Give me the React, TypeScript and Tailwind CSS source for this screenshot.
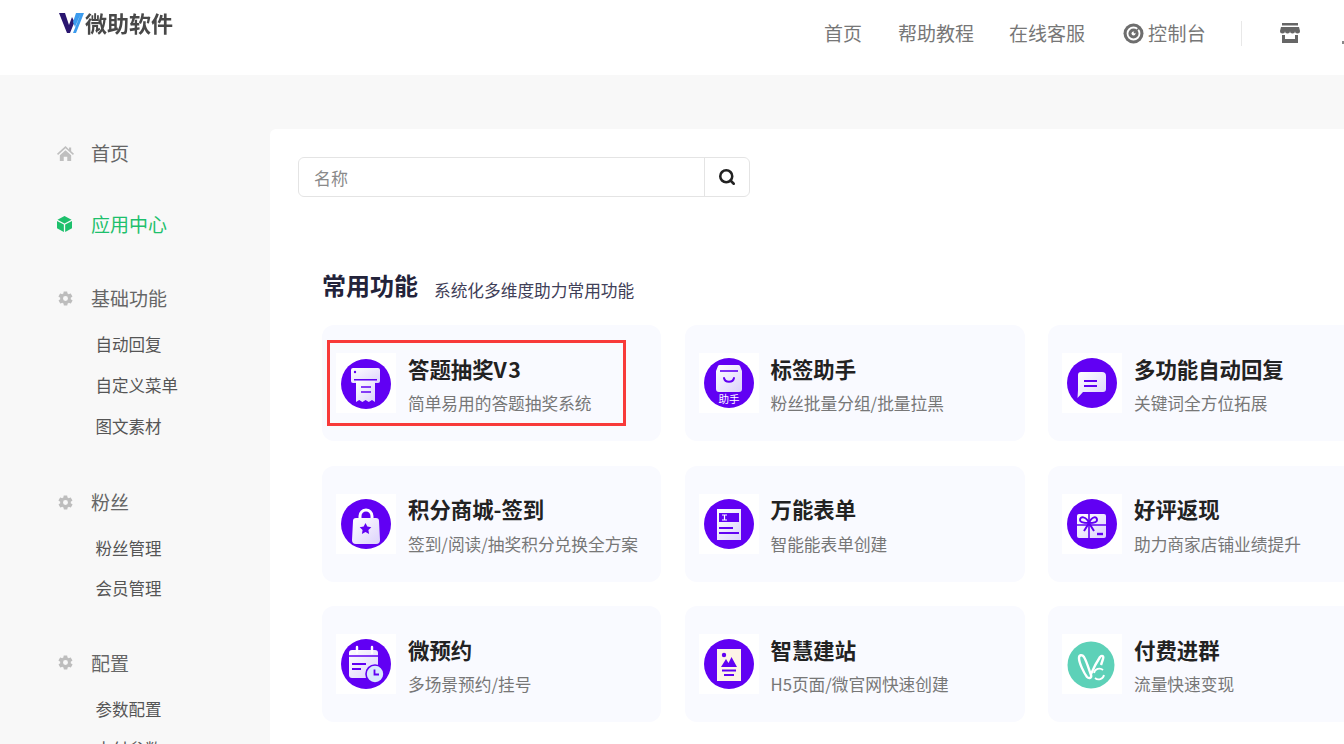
import React from 'react'
import { Search } from 'lucide-react'

const PURPLE = '#6100f3'
const LIGHT = 'url(#lav)'

function IconShell({ children, bg = PURPLE, r = 25, cx = 30, cy = 30 }: { children: React.ReactNode; bg?: string; r?: number; cx?: number; cy?: number }) {
  return (
    <svg width="60" height="60" viewBox="0 0 60 60" className="block">
      <defs>
        <linearGradient id="lav" x1="0" y1="0" x2="1" y2="1">
          <stop offset="0" stopColor="#ffffff" />
          <stop offset="1" stopColor="#dcd2fb" />
        </linearGradient>
      </defs>
      <circle cx={cx} cy={cy} r={r} fill={bg} />
      {children}
    </svg>
  )
}

const icons: Record<string, React.ReactNode> = {
  printer: (
    <IconShell cy={31}>
      <path d="M15 17a2 2 0 0 1 2-2h25a2 2 0 0 1 2 2v11a2 2 0 0 1-2 2H17a2 2 0 0 1-2-2z" fill={LIGHT} />
      <circle cx="19" cy="19" r="1.200" fill={PURPLE} />
      <path d="M18 26h23v1.500H18z" fill={PURPLE} />
      <path d="M20 28h19v21l-3-2-3.200 2-3.200-2-3.200 2-3.200-2-3.200 2z" fill={LIGHT} />
      <path d="M25 34h10M25 39h10" stroke={PURPLE} strokeWidth="1.600" />
    </IconShell>
  ),
  bag: (
    <IconShell>
      <path d="M21 12h18a2 2 0 0 1 2 1l2 5v18a3 3 0 0 1-3 3H20a3 3 0 0 1-3-3V18l2-5a2 2 0 0 1 2-1z" fill={LIGHT} />
      <path d="M21 18h18" stroke={PURPLE} strokeWidth="1.600" />
      <path d="M25 25c1 5 9 5 10 0" fill="none" stroke={PURPLE} strokeWidth="2" strokeLinecap="round" />
      <text x="30" y="49.500" textAnchor="middle" fontSize="10.500" fill="#ffffff" fontFamily="'Noto Sans CJK SC', sans-serif">助手</text>
    </IconShell>
  ),
  chat: (
    <IconShell>
      <path d="M19 19h21a4 4 0 0 1 4 4v13a3 3 0 0 1-3 3H21l-5.500 6 .5-8V22a3 3 0 0 1 3-3z" fill={LIGHT} />
      <path d="M22 28h13M22 33h13" stroke={PURPLE} strokeWidth="2" />
    </IconShell>
  ),
  lock: (
    <IconShell>
      <path d="M24 25v-3a6 6 0 0 1 12 0v3" fill="none" stroke="#ffffff" strokeWidth="3" />
      <path d="M20 24h20a3 3 0 0 1 3 3l1 19a4 4 0 0 1-4 4H20a4 4 0 0 1-4-4l1-19a3 3 0 0 1 3-3z" fill="url(#lav)" />
      <path d="M29.500 29l1.800 3.600 4 .6-2.900 2.800.7 4-3.600-1.900-3.600 1.900.7-4-2.900-2.800 4-.6z" fill={PURPLE} />
    </IconShell>
  ),
  form: (
    <IconShell>
      <path d="M18 15h24v31H18z" fill={LIGHT} />
      <path d="M20 19h20v9H20z" fill={PURPLE} />
      <path d="M23 21h5M25.500 21v5M23 26h5" stroke="#ffffff" strokeWidth="1.200" />
      <path d="M20 34h14M20 39h20" stroke={PURPLE} strokeWidth="2" />
    </IconShell>
  ),
  gift: (
    <IconShell>
      <path d="M15 22a2 2 0 0 1 2-2h25a2 2 0 0 1 2 2v20a2 2 0 0 1-2 2H17a2 2 0 0 1-2-2z" fill={LIGHT} />
      <path d="M27 20v24M15 31h29" stroke={PURPLE} strokeWidth="1.600" />
      <path d="M27 29c-3-7-9-7-9-3 0 3 6 3 9 3zm0 0c3-7 8-7 8-3 0 3-5 3-8 3zm0 0l-5 8m5-8l5 8" fill="none" stroke={PURPLE} strokeWidth="2" />
      <path d="M35 40h6" stroke={PURPLE} strokeWidth="2.400" />
    </IconShell>
  ),
  calendar: (
    <IconShell>
      <path d="M16 16h23a3 3 0 0 1 3 3v22a3 3 0 0 1-3 3H16a3 3 0 0 1-3-3V19a3 3 0 0 1 3-3z" fill={LIGHT} />
      <path d="M13 22h29" stroke={PURPLE} strokeWidth="1.500" />
      <path d="M21 13v6M36 13v6" stroke="#ffffff" strokeWidth="2.400" strokeLinecap="round" />
      <path d="M16 30h14M16 35h9" stroke={PURPLE} strokeWidth="2" />
      <circle cx="39" cy="40" r="9" fill="#d9e8fd" stroke={PURPLE} strokeWidth="1.600" />
      <path d="M38.500 35.500v5h4.500" fill="none" stroke={PURPLE} strokeWidth="1.800" />
    </IconShell>
  ),
  poster: (
    <IconShell>
      <path d="M18 15h24v32H18z" fill="#fdf3e6" />
      <circle cx="25" cy="21" r="2.200" fill={PURPLE} />
      <path d="M22 33l5-8 2.500 4 3-6 5.500 10z" fill={PURPLE} />
      <path d="M23 36.500h14M25 41h10" stroke={PURPLE} strokeWidth="1.800" />
    </IconShell>
  ),
  group: (
    <IconShell bg="#5dd1b8" r={23.500} cx={29} cy={31}>
      <path d="M17 24c0-3 3-4 5-1 3 5 5 13 7 18 1 3-2 4-4 2-3-4-8-14-8-19z" fill="none" stroke="#ffffff" strokeWidth="2.400" />
      <path d="M29 40c3-7 7-14 9-17 2-2 4-1 3 2l-2 6" fill="none" stroke="#ffffff" strokeWidth="2.400" />
      <path d="M32 39a5.500 5.500 0 0 1 9-3M42 41a5.500 5.500 0 0 1-9 3" fill="none" stroke="#ffffff" strokeWidth="1.800" />
    </IconShell>
  ),
}

const cards = [
  { icon: 'printer', title: '答题抽奖', latin: 'V3', desc: '简单易用的答题抽奖系统', marked: true },
  { icon: 'bag', title: '标签助手', desc: '粉丝批量分组/批量拉黑' },
  { icon: 'chat', title: '多功能自动回复', desc: '关键词全方位拓展' },
  { icon: 'lock', title: '积分商城-签到', desc: '签到/阅读/抽奖积分兑换全方案' },
  { icon: 'form', title: '万能表单', desc: '智能能表单创建' },
  { icon: 'gift', title: '好评返现', desc: '助力商家店铺业绩提升' },
  { icon: 'calendar', title: '微预约', desc: '多场景预约/挂号' },
  { icon: 'poster', title: '智慧建站', desc: 'H5页面/微官网快速创建' },
  { icon: 'group', title: '付费进群', desc: '流量快速变现' },
]

function Gear() {
  return (
    <svg width="17" height="17" viewBox="0 0 24 24" fill="#bdbdbd">
      <path d="M19.400 13c.1-.3.100-.7.100-1s0-.7-.1-1l2.100-1.600c.2-.1.200-.4.100-.6l-2-3.500c-.1-.2-.4-.3-.6-.2l-2.500 1c-.5-.4-1.100-.7-1.700-1l-.4-2.700c0-.2-.2-.4-.5-.4h-4c-.3 0-.5.200-.5.400l-.4 2.700c-.6.300-1.200.6-1.700 1l-2.500-1c-.2-.1-.5 0-.6.200l-2 3.500c-.1.200-.1.500.1.600L4.600 11c-.1.300-.1.700-.1 1s0 .7.100 1l-2.100 1.600c-.2.100-.2.400-.1.600l2 3.500c.1.200.4.300.6.200l2.500-1c.5.400 1.100.7 1.700 1l.4 2.700c0 .2.200.4.500.4h4c.3 0 .5-.2.500-.4l.4-2.700c.6-.3 1.200-.6 1.700-1l2.500 1c.2.100.5 0 .6-.2l2-3.500c.1-.2.100-.5-.1-.6zM12 15.500a3.500 3.500 0 1 1 0-7 3.500 3.500 0 0 1 0 7z" />
    </svg>
  )
}

function SideHead({ icon, label, active, className }: { icon: React.ReactNode; label: string; active?: boolean; className?: string }) {
  return (
    <div className={`flex items-center h-[30px] pl-[57px] ${className ?? ''}`}>
      <span className="w-[34px] flex items-center">{icon}</span>
      <span className={`text-[19px] leading-[30px] ${active ? 'text-[#1dc06c]' : 'text-[#666666]'}`}>{label}</span>
    </div>
  )
}

function SideSub({ items, className, rowClass = 'h-[40px]' }: { items: string[]; className?: string; rowClass?: string }) {
  return (
    <ul className={`pl-[95.500px] ${className ?? ''}`}>
      {items.map((t) => (
        <li key={t} className={`${rowClass} leading-[40px] text-[16.500px] text-[#555555]`}>{t}</li>
      ))}
    </ul>
  )
}

export default function App() {
  return (
    <div
      className="w-[1344px] h-[744px] overflow-hidden bg-[#f8f8f8] flex flex-col"
      style={{ fontFamily: '"Noto Sans CJK SC", "Noto Sans", sans-serif' }}
    >
      <header className="h-[75px] shrink-0 bg-white flex items-start relative">
        <div className="flex items-center pl-[59px] pt-[10px]">
          <svg width="25" height="20" viewBox="0 0 25 20">
            <path d="M0 0h6l4 12 3-8 2.500 5L11 20H8z" fill="#2a1670" />
            <path d="M14 20L22 0h3l-8 20z M14 9l3-9h5l-6 14z" fill="#3b9bee" />
          </svg>
          <span className="text-[22px] leading-[26px] font-bold text-[#484848] blur-[0.4px] ml-[1px] -mt-[1px]">微助软件</span>
        </div>
        <nav className="ml-auto flex items-center h-[67px] text-[19px] text-[#777777] w-[520px]">
          <a className="w-[74px]">首页</a>
          <a className="w-[111px]">帮助教程</a>
          <a className="w-[114px]">在线客服</a>
          <a className="flex items-center -mt-[1px]">
            <svg width="21" height="21" viewBox="0 0 21 21" className="mr-[4px]">
              <circle cx="10.500" cy="10.500" r="10" fill="#6e6e6e" />
              <circle cx="10.500" cy="10.500" r="6" fill="none" stroke="#ffffff" strokeWidth="1.800" />
              <circle cx="10.500" cy="10.500" r="2" fill="#ffffff" />
              <path d="M11 10l5-5" stroke="#6e6e6e" strokeWidth="1.500" />
            </svg>
            <span className="tracking-[0.4px]">控制台</span>
          </a>
          <span className="w-px h-[25px] bg-[#e8e8e8] ml-[35px]" />
          <svg width="20" height="20" viewBox="0 0 20 20" className="ml-[38px] -mt-[1px]">
            <path d="M2 0h16v2.500H2z" fill="#666666" />
            <path d="M1 4h18l1 4a2.500 2.500 0 0 1-5 0 2.500 2.500 0 0 1-5 0 2.500 2.500 0 0 1-5 0 2.500 2.500 0 0 1-5 0z" fill="#666666" />
            <path d="M2 12h16v8H2z" fill="#666666" />
            <path d="M5 12h10v4H5z" fill="#ffffff" />
          </svg>
        </nav>
        <span className="absolute left-[1342px] top-[41px] w-[2px] h-[3px] bg-[#888888]" />
      </header>

      <div className="flex flex-1 min-h-0">
        <aside className="w-[270px] shrink-0 pt-[63px]">
          <SideHead
            label="首页"
            icon={
              <svg width="17" height="15" viewBox="0 0 24 21" fill="#bfbfbf">
                <path d="M12 0L0 11l1.500 1.500L12 3l10.500 9.500L24 11l-4-3.600V2h-3v2.700z" />
                <path d="M4 13l8-7 8 7v8h-5.500v-6h-5v6H4z" />
              </svg>
            }
          />
          <SideHead
            className="mt-[41px]"
            active
            label="应用中心"
            icon={
              <svg width="15" height="16" viewBox="0 0 16 17">
                <path d="M8 0l7.500 4L8 8 .5 4z" fill="#1dc06c" />
                <path d="M0 5.200l7.300 3.900V17L0 13z" fill="#1dc06c" />
                <path d="M16 5.200L8.700 9.100V17L16 13z" fill="#1dc06c" />
              </svg>
            }
          />
          <SideHead className="mt-[44px]" icon={<Gear />} label="基础功能" />
          <SideSub className="mt-[11px]" rowClass="h-[41px]" items={['自动回复', '自定义菜单', '图文素材']} />
          <SideHead className="mt-[40px]" icon={<Gear />} label="粉丝" />
          <SideSub className="mt-[10.500px]" items={['粉丝管理', '会员管理']} />
          <SideHead className="mt-[40px]" icon={<Gear />} label="配置" />
          <SideSub className="mt-[11px]" items={['参数配置', '支付参数']} />
        </aside>

        <main className="flex-1 mt-[54px] bg-white rounded-tl-[6px] min-w-0 overflow-hidden">
          <div className="ml-[28px] mt-[28px] w-[452px] h-[40px] flex border border-[#e4e4e4] rounded-[6px]">
            <div className="flex-1 pl-[15px] text-[17px] leading-[40px] text-[#8a8a8a]">名称</div>
            <div className="w-[45px] border-l border-[#e4e4e4] flex items-center justify-center">
              <Search size={18} strokeWidth={3.4} color="#222222" />
            </div>
          </div>

          <div className="ml-[52px] mt-[70px] flex items-baseline h-[38px]">
            <h2 className="text-[24px] leading-[36px] font-bold text-[#23233a]">常用功能</h2>
            <span className="ml-[16px] mt-[2px] relative top-[2px] text-[16.700px] text-[#3f4058]">系统化多维度助力常用功能</span>
          </div>

          <div className="ml-[52px] mt-[20px] grid grid-cols-[339px_340px_340px] gap-x-[23.500px] gap-y-[24.500px] w-[1100px]">
            {cards.map((c) => (
              <div key={c.title} className="relative h-[116px] bg-[#f9faff] rounded-[12px] flex items-start pl-[14px] pt-[28px]">
                <div className="w-[60px] h-[60px] bg-white shrink-0">{icons[c.icon]}</div>
                <div className="ml-[12px] pt-[0.500px]">
                  <div className="text-[21.400px] leading-[30px] font-bold text-[#222222] whitespace-nowrap">
                    {c.title}
                    {c.latin && <span className="tracking-[1.500px]">{c.latin}</span>}
                  </div>
                  <div className="mt-[7.500px] text-[16.700px] leading-[24px] text-[#777777] whitespace-nowrap">{c.desc}</div>
                </div>
                {c.marked && (
                  <div className="absolute left-[5px] top-[15px] w-[299px] h-[86px] border-[3px] border-[#f83a3a]" />
                )}
              </div>
            ))}
          </div>
        </main>
      </div>
    </div>
  )
}
